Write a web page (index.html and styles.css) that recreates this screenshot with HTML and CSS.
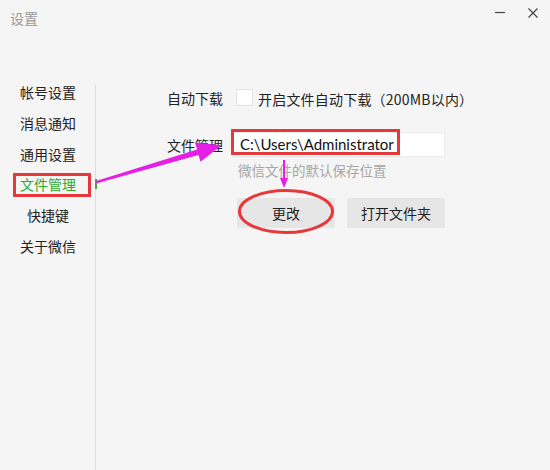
FILE: index.html
```html
<!DOCTYPE html>
<html lang="zh-CN">
<head>
    <meta charset="UTF-8">
    <title>设置</title>
    <link rel="stylesheet" href="styles.css">
</head>
<body>
    <div class="window">
        <div class="titlebar">
            <div class="title">设置</div>
            <div class="win-btns">
                <svg class="win-btn" width="10" height="10" viewBox="0 0 10 10">
                    <line x1="0" y1="4.5" x2="10" y2="4.5" stroke="#444" stroke-width="1.2"/>
                </svg>
                <svg class="win-btn" width="10" height="10" viewBox="0 0 10 10">
                    <path d="M0.5 0.5 L9.5 9.5 M9.5 0.5 L0.5 9.5" stroke="#444" stroke-width="1.2" fill="none"/>
                </svg>
            </div>
        </div>

        <div class="layout">
            <ul class="nav">
                <li>帐号设置</li>
                <li>消息通知</li>
                <li>通用设置</li>
                <li class="active">文件管理</li>
                <li>快捷键</li>
                <li>关于微信</li>
            </ul>

            <div class="content">
                <div class="row row-auto">
                    <div class="row-label">自动下载</div>
                    <span class="checkbox"></span>
                    <span class="check-text">开启文件自动下载（200MB以内）</span>
                </div>

                <div class="row row-path">
                    <div class="row-label">文件管理</div>
                    <div class="path-box">C:\Users\Administrator</div>
                </div>
                <div class="hint">微信文件的默认保存位置</div>

                <div class="buttons">
                    <button class="btn">更改</button>
                    <button class="btn">打开文件夹</button>
                </div>
            </div>
        </div>

        <!-- 标注 -->
        <svg class="marks" width="550" height="470" viewBox="0 0 550 470">
            <rect x="14.5" y="174.5" width="75" height="21" fill="none" stroke="#e5393b" stroke-width="3"/>
            <rect x="232.5" y="130.5" width="166" height="23" fill="none" stroke="#e5393b" stroke-width="3"/>
            <ellipse cx="286" cy="211.5" rx="46.5" ry="21" fill="none" stroke="#e5393b" stroke-width="3"/>
            <polygon points="96,181 197,149.5 195,142.6 221.5,145.2 200.5,161.8 198.6,155 96,183.5" fill="#e61fe6"/>
            <polygon points="283,160 285,160 285,178 288,178 284,188 280,178 283,178" fill="#e61fe6"/>
        </svg>
    </div>
</body>
</html>
```

FILE: styles.css
```css
* {
    box-sizing: border-box;
}
body {
    margin: 0;
    background: #f5f5f5;
    font-family: "Noto Sans CJK SC", "Noto Sans", sans-serif;
    color: #222;
}
.window {
    position: relative;
    width: 550px;
    height: 470px;
    overflow: hidden;
}
.titlebar {
    display: flex;
    justify-content: space-between;
    height: 77px;
    padding: 8px 12px 0 10px;
}
.title {
    font-size: 14px;
    line-height: 20px;
    color: #999;
}
.win-btns {
    display: flex;
    gap: 23px;
}
.win-btn {
    display: block;
}
.layout {
    display: flex;
    height: 393px;
}
.nav {
    list-style: none;
    margin: 0;
    padding: 0;
    width: 95px;
}
.nav li {
    position: relative;
    height: 30.8px;
    line-height: 30.8px;
    font-size: 14px;
    text-align: center;
    padding-left: 1px;
}
.nav li.active {
    color: #2eaa30;
}
.nav li.active::after {
    content: "";
    position: absolute;
    right: -2px;
    top: 10px;
    width: 2px;
    height: 10px;
    background: #3bb13c;
}
.content {
    flex: 1;
    margin-top: 8px;
    border-left: 1px solid #dedede;
    padding: 4px 0 0 71px;
}
.row {
    display: flex;
    align-items: center;
    font-size: 14px;
    line-height: 20px;
}
.row-auto {
    height: 17px;
}
.row-label {
    width: 66px;
}
.checkbox {
    width: 17px;
    height: 17px;
    margin-left: 3px;
    background: #fff;
    border: 1px solid #e3e3e3;
}
.check-text {
    margin-left: 5px;
    padding-top: 2px;
    letter-spacing: 0.2px;
}
.row-path {
    height: 25px;
    margin-top: 26px;
}
.path-box {
    width: 212px;
    height: 25px;
    line-height: 23px;
    padding-left: 6px;
    background: #fff;
    border: 1px solid #ebebeb;
    font-family: Lato, "Noto Sans", sans-serif;
    font-size: 15px;
    color: #111;
}
.hint {
    margin: 3px 0 0 71px;
    font-size: 13.5px;
    line-height: 20px;
    color: #a6a6a6;
}
.buttons {
    display: flex;
    gap: 12px;
    margin: 18px 0 0 70px;
}
.btn {
    width: 98px;
    height: 30px;
    border: none;
    border-radius: 2px;
    background: #e6e6e6;
    font-family: inherit;
    font-size: 14px;
    color: #222;
}
.marks {
    position: absolute;
    left: 0;
    top: 0;
    pointer-events: none;
}
```
